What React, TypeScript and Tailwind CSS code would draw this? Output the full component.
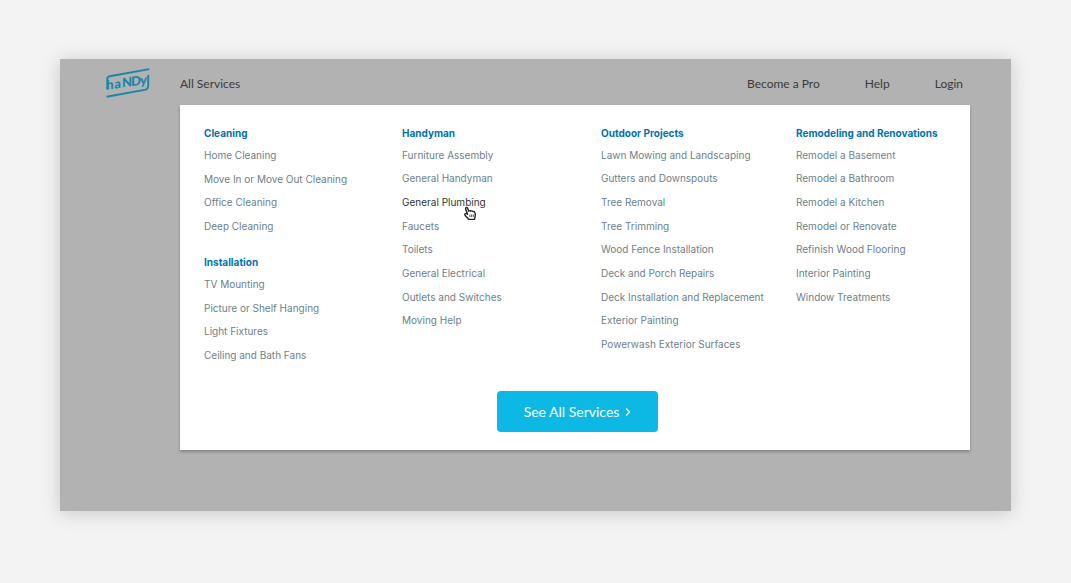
import { ChevronRight } from "lucide-react";

type Group = { title: string; items: string[] };

const columns: Group[][] = [
  [
    {
      title: "Cleaning",
      items: ["Home Cleaning", "Move In or Move Out Cleaning", "Office Cleaning", "Deep Cleaning"],
    },
    {
      title: "Installation",
      items: ["TV Mounting", "Picture or Shelf Hanging", "Light Fixtures", "Ceiling and Bath Fans"],
    },
  ],
  [
    {
      title: "Handyman",
      items: [
        "Furniture Assembly",
        "General Handyman",
        "General Plumbing",
        "Faucets",
        "Toilets",
        "General Electrical",
        "Outlets and Switches",
        "Moving Help",
      ],
    },
  ],
  [
    {
      title: "Outdoor Projects",
      items: [
        "Lawn Mowing and Landscaping",
        "Gutters and Downspouts",
        "Tree Removal",
        "Tree Trimming",
        "Wood Fence Installation",
        "Deck and Porch Repairs",
        "Deck Installation and Replacement",
        "Exterior Painting",
        "Powerwash Exterior Surfaces",
      ],
    },
  ],
  [
    {
      title: "Remodeling and Renovations",
      items: [
        "Remodel a Basement",
        "Remodel a Bathroom",
        "Remodel a Kitchen",
        "Remodel or Renovate",
        "Refinish Wood Flooring",
        "Interior Painting",
        "Window Treatments",
      ],
    },
  ],
];

const activeItem = "General Plumbing";

function Logo() {
  return (
    <svg
      className="overflow-visible"
      width="46"
      height="32"
      viewBox="0 0 46 32"
      fill="none"
      aria-hidden="true"
    >
      <g stroke="#1787a9" strokeWidth="1.9">
        <path d="M2.3 21.2V10.9Q2.3 8.7 4.8 8.2L44.2 1.1" />
        <path d="M1.6 28.7L39.4 21.9Q43.2 21.1 43.2 17.9V7.1" />
      </g>
      <text
        x="1.2 9.2 17 26 35"
        y="22"
        transform="skewY(-8)"
        fill="#1787a9"
        fontFamily="Lato, sans-serif"
        fontWeight="900"
        fontSize="13"
      >
        haNDy
      </text>
    </svg>
  );
}

function HandPointer() {
  return (
    <svg
      className="pointer-events-none absolute left-[61px] top-4"
      width="14"
      height="15"
      viewBox="0 0 14 15"
      aria-hidden="true"
    >
      <path
        d="M4.6 8.2L2.6 3C2.1 1.6 3.9 .8 4.5 2.1L5.8 5.2C6.3 4.5 7.4 4.5 7.8 5.2C8.4 4.6 9.5 4.8 9.8 5.6C10.7 5.1 11.8 5.7 12 6.7C12.4 8.4 12.6 10 11.9 11.6L11.5 13.4H5.6C5 12 3.4 10.9 2 9.2C1.3 8.2 2.3 7.2 3.3 7.7Z"
        fill="#fff"
        stroke="#222"
        strokeWidth="1.4"
        strokeLinejoin="round"
      />
      <path d="M6.9 8.5V11M8.6 8.5V11M10.3 8.5V11" stroke="#222" strokeWidth=".8" />
    </svg>
  );
}

function ServiceGroup({ group, rows }: { group: Group; rows: string }) {
  return (
    <section>
      <h2 className="text-[10px] font-bold leading-5 text-[#0272a8]">{group.title}</h2>
      <ul className={`grid ${rows}`}>
        {group.items.map((item) => (
          <li key={item} className="relative flex items-center whitespace-nowrap leading-5">
            <a href="#" className={item === activeItem ? "text-[#333]" : "text-[#6c7f8a]"}>
              {item}
            </a>
            {item === activeItem && <HandPointer />}
          </li>
        ))}
      </ul>
    </section>
  );
}

export default function App() {
  return (
    <div className="min-h-screen bg-[#f3f3f3] px-[60px] pb-[72px] pt-[59px] font-['Inter',sans-serif]">
      <div className="bg-[#b2b2b2] pb-[61px] shadow-[0_2px_18px_rgba(0,0,0,0.18)]">
        <header className="flex h-[46px] items-center pl-[45px] pr-12 pt-1 font-['Lato',sans-serif] text-xs text-[#3a3a3a]">
          <a href="#" aria-label="Handy" className="w-[75px]">
            <Logo />
          </a>
          <a href="#">All Services</a>
          <nav className="ml-auto flex items-center gap-[45px]">
            <a href="#">Become a Pro</a>
            <a href="#">Help</a>
            <a href="#">Login</a>
          </nav>
        </header>
        <main className="ml-[120px] mr-[41px] bg-white px-6 pb-[18px] pt-[18px] text-[10px] shadow-[0_2px_3px_rgba(0,0,0,0.25)]">
          <div className="grid grid-cols-[198fr_199fr_195fr_150fr]">
            {columns.map((groups) => (
              <div key={groups[0].title} className="flex min-w-0 flex-col gap-[14px]">
                {groups.map((group) => (
                  <ServiceGroup
                    key={group.title}
                    group={group}
                    rows={groups.length > 1 ? "h-[95px] grid-rows-4" : "h-[213px] grid-rows-9"}
                  />
                ))}
              </div>
            ))}
          </div>
          <div className="mt-6 flex justify-center pl-1">
            <button
              type="button"
              className="flex h-[41px] w-[161px] items-center justify-center gap-[3px] rounded bg-[#0db8e5] pl-1 font-['Lato',sans-serif] text-sm text-white"
            >
              See All Services
              <ChevronRight size={12} strokeWidth={2.5} />
            </button>
          </div>
        </main>
      </div>
    </div>
  );
}
